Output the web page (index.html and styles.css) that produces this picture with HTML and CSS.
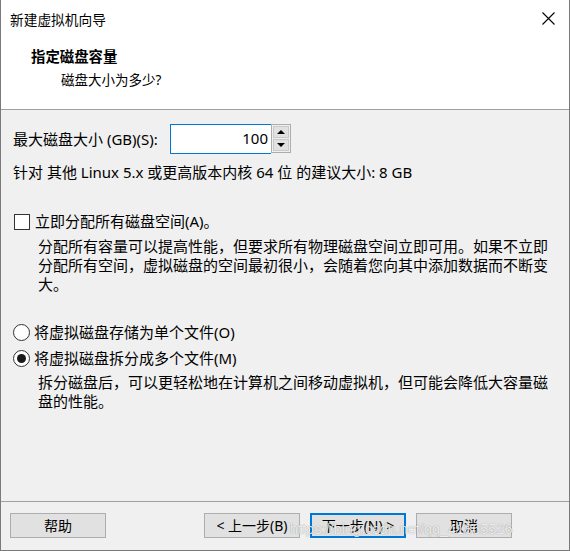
FILE: index.html
```html
<!DOCTYPE html>
<html lang="zh-CN">
<head>
<meta charset="utf-8">
<title>新建虚拟机向导</title>
<link rel="stylesheet" href="styles.css">
</head>
<body>
<div class="window">
  <div class="titlebar">
    <span class="title">新建虚拟机向导</span>
    <svg class="close" width="13" height="13" viewBox="0 0 13 13"><path d="M0.5 0.5 L12.5 12.5 M12.5 0.5 L0.5 12.5" stroke="#000" stroke-width="1.1" fill="none"/></svg>
  </div>
  <div class="header">
    <div class="h-title">指定磁盘容量</div>
    <div class="h-sub">磁盘大小为多少?</div>
  </div>
  <div class="body">
    <div class="row-size">
      <span class="lbl">最大磁盘大小 (GB)(S):</span>
      <div class="spin">
        <div class="spin-input">100</div>
        <div class="spin-btns">
          <div class="sbtn"><span class="tri-up"></span></div>
          <div class="sbtn"><span class="tri-down"></span></div>
        </div>
      </div>
    </div>
    <div class="rec">针对 其他 Linux 5.x 或更高版本内核 64 位 的建议大小: 8 GB</div>
    <div class="check-row"><span class="checkbox"></span><span>立即分配所有磁盘空间(A)。</span></div>
    <div class="desc desc1">分配所有容量可以提高性能，但要求所有物理磁盘空间立即可用。如果不立即分配所有空间，虚拟磁盘的空间最初很小，会随着您向其中添加数据而不断变大。</div>
    <div class="radio-row r1"><span class="radio"></span><span>将虚拟磁盘存储为单个文件(O)</span></div>
    <div class="radio-row r2"><span class="radio checked"></span><span>将虚拟磁盘拆分成多个文件(M)</span></div>
    <div class="desc desc2">拆分磁盘后，可以更轻松地在计算机之间移动虚拟机，但可能会降低大容量磁盘的性能。</div>
  </div>
  <div class="footer">
    <div class="btn">帮助</div>
    <div class="btn back">&lt; 上一步(B)</div>
    <div class="btn default">下一步(N) &gt;</div>
    <div class="btn">取消</div>
    <span class="watermark">https://blog.csdn.net/qq_41865526</span>
  </div>
</div>
</body>
</html>
```

FILE: styles.css
```css
html, body {
  margin: 0;
  padding: 0;
  background: #fff;
}
body {
  font-family: "Noto Sans", "Noto Sans CJK SC", "Microsoft YaHei", sans-serif;
  color: #000;
}
.window {
  width: 570px;
  height: 551px;
  box-sizing: border-box;
  border: 1px solid #7a7a7a;
  border-top: none;
  display: flex;
  flex-direction: column;
  background: #fff;
}
.titlebar {
  height: 40px;
  display: flex;
  align-items: center;
  justify-content: space-between;
  padding-left: 9px;
  padding-right: 14px;
  flex: none;
}
.title {
  font-size: 13.7px;
  line-height: 20px;
}
.close {
  align-self: flex-start;
  margin-top: 12px;
}
.header {
  height: 70px;
  box-sizing: border-box;
  padding-top: 7px;
  border-bottom: 1px solid #a0a0a0;
  flex: none;
}
.h-title {
  font-size: 14.4px;
  font-weight: bold;
  line-height: 20px;
  padding-left: 30px;
}
.h-sub {
  font-size: 13.5px;
  line-height: 20px;
  margin-top: 3px;
  padding-left: 60px;
}
.body {
  background: #f0f0f0;
  height: 391px;
  box-sizing: border-box;
  padding: 14px 0 0 12px;
  font-size: 15px;
  line-height: 19px;
  flex: none;
}
.row-size {
  display: flex;
  align-items: center;
  height: 30px;
}
.lbl {
  width: 157px;
}
.spin {
  display: flex;
  height: 30px;
}
.spin-input {
  width: 101px;
  height: 30px;
  box-sizing: border-box;
  border: 1px solid #0078d7;
  border-right: none;
  background: #fff;
  text-align: right;
  padding-right: 3px;
  line-height: 27px;
}
.spin-btns {
  width: 20px;
  height: 29px;
  box-sizing: border-box;
  border: 1px solid #adadad;
  background: #f0f0f0;
  display: flex;
  flex-direction: column;
  gap: 1px;
  padding: 1px;
}
.sbtn {
  flex: 1;
  background: #e1e1e1;
  border: 1px solid #c9c9c9;
  display: flex;
  align-items: center;
  justify-content: center;
}
.tri-up {
  width: 0;
  height: 0;
  border-left: 4px solid transparent;
  border-right: 4px solid transparent;
  border-bottom: 4px solid #000;
}
.tri-down {
  width: 0;
  height: 0;
  border-left: 4px solid transparent;
  border-right: 4px solid transparent;
  border-top: 4px solid #000;
}
.rec {
  margin-top: 9px;
}
.check-row {
  margin-top: 30px;
  display: flex;
  align-items: center;
  gap: 5px;
  margin-left: 1px;
}
.checkbox {
  width: 16px;
  height: 16px;
  box-sizing: border-box;
  border: 1px solid #333;
  background: #fff;
  flex: none;
}
.desc {
  padding-left: 25px;
  width: 522px;
}
.desc1 {
  margin-top: 6px;
}
.radio-row {
  display: flex;
  align-items: center;
  gap: 4px;
}
.r1 {
  margin-top: 29px;
}
.r2 {
  margin-top: 7px;
}
.radio {
  width: 17px;
  height: 17px;
  box-sizing: border-box;
  border: 1px solid #333;
  border-radius: 50%;
  background: #fff;
  flex: none;
  display: flex;
  align-items: center;
  justify-content: center;
}
.radio.checked::after {
  content: "";
  width: 9px;
  height: 9px;
  border-radius: 50%;
  background: #1a1a1a;
}
.desc2 {
  margin-top: 5px;
}
.footer {
  flex: 1;
  background: #f0f0f0;
  border-top: 1px solid #a0a0a0;
  display: flex;
  align-items: flex-start;
  gap: 10px;
  padding: 11px 57px 0 9px;
  position: relative;
}
.btn {
  width: 96px;
  height: 25px;
  box-sizing: border-box;
  border: 1px solid #adadad;
  background: #e1e1e1;
  font-size: 14px;
  line-height: 23px;
  text-align: center;
}
.back {
  margin-left: auto;
}
.default {
  border: 2px solid #0078d7;
  line-height: 21px;
}
.watermark {
  position: absolute;
  left: 289px;
  top: 19px;
  font-family: "Liberation Sans", Arial, sans-serif;
  font-size: 14.5px;
  color: rgba(255, 255, 255, 0.85);
  text-shadow: 0 0 1px rgba(0, 0, 0, 0.45);
  pointer-events: none;
}
```
